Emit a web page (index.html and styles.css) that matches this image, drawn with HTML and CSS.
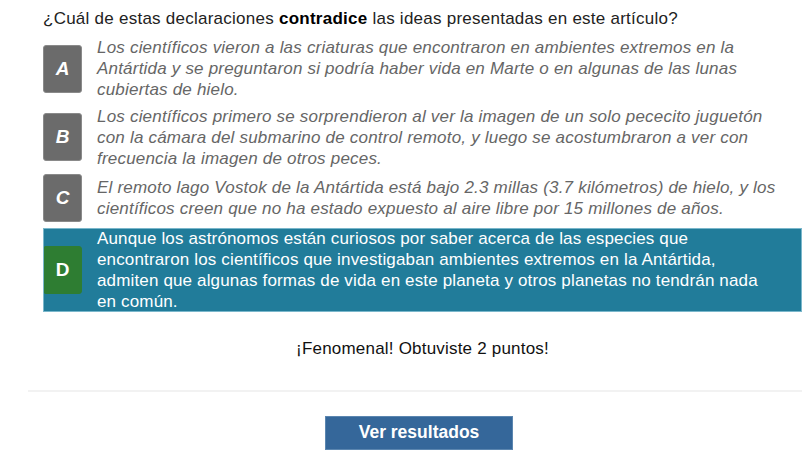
FILE: index.html
```html
<!DOCTYPE html>
<html lang="es">
<head>
<meta charset="utf-8">
<link rel="stylesheet" href="styles.css">
</head>
<body>
<div class="page">
  <div class="quiz">
    <p class="question">¿Cuál de estas declaraciones <b>contradice</b> las ideas presentadas en este artículo?</p>
    <div class="options">
      <div class="option">
        <span class="letter">A</span>
        <span class="text">Los científicos vieron a las criaturas que encontraron en ambientes extremos en la Antártida y se preguntaron si podría haber vida en Marte o en algunas de las lunas cubiertas de hielo.</span>
      </div>
      <div class="option">
        <span class="letter">B</span>
        <span class="text">Los científicos primero se sorprendieron al ver la imagen de un solo pececito juguetón con la cámara del submarino de control remoto, y luego se acostumbraron a ver con frecuencia la imagen de otros peces.</span>
      </div>
      <div class="option">
        <span class="letter">C</span>
        <span class="text">El remoto lago Vostok de la Antártida está bajo 2.3 millas (3.7 kilómetros) de hielo, y los científicos creen que no ha estado expuesto al aire libre por 15 millones de años.</span>
      </div>
      <div class="option correct">
        <span class="letter">D</span>
        <span class="text">Aunque los astrónomos están curiosos por saber acerca de las especies que encontraron los científicos que investigaban ambientes extremos en la Antártida, admiten que algunas formas de vida en este planeta y otros planetas no tendrán nada en común.</span>
      </div>
    </div>
    <p class="feedback">¡Fenomenal! Obtuviste 2 puntos!</p>
  </div>
  <div class="footer">
    <hr class="sep">
    <button class="results">Ver resultados</button>
  </div>
</div>
</body>
</html>
```

FILE: styles.css
```css
* { box-sizing: border-box; }
html, body { margin: 0; padding: 0; background: #fff; }
body { font-family: "Liberation Sans", Arial, sans-serif; }
.page { padding-left: 28px; width: 810px; }
.quiz { padding-left: 15px; width: 774px; }
.question {
  margin: 0;
  padding-top: 8px;
  font-size: 17px;
  letter-spacing: 0.25px;
  line-height: 21px;
  color: #222;
}
.question b { color: #000; }
.options {
  margin-top: 8px;
  display: flex;
  flex-direction: column;
  gap: 5.5px;
}
.option {
  display: flex;
  align-items: center;
  gap: 15px;
  min-height: 48px;
}
.letter {
  flex: none;
  width: 39px;
  height: 48px;
  display: flex;
  align-items: center;
  justify-content: center;
  background: #6b6b6b;
  border: 1px solid #8a8a8a;
  border-radius: 3px;
  color: #fff;
  font-weight: bold;
  font-style: italic;
  font-size: 19px;
}
.text {
  font-style: italic;
  font-size: 17px;
  letter-spacing: 0.2px;
  line-height: 21px;
  color: #666;
  padding-right: 17px;
}
.option.correct {
  background: #217c9a;
  outline: 1px solid #7ab7cb;
  outline-offset: -1px;
}
.option.correct .letter {
  background: #2e7d32;
  border-color: #2e7d32;
  font-style: normal;
}
.option.correct .text {
  color: #fff;
  font-style: normal;
  letter-spacing: 0.15px;
  padding-right: 25px;
}
.feedback {
  margin: 26px 0 0 0;
  text-align: center;
  font-size: 17px;
  letter-spacing: 0.2px;
  line-height: 21px;
  color: #111;
}
.footer {
  display: flex;
  flex-direction: column;
  align-items: center;
}
.sep {
  align-self: stretch;
  margin: 31px 8px 0 0;
  border: 0;
  height: 2px;
  background: #f2f2f2;
}
.results {
  margin-top: 24px;
  width: 188px;
  height: 34px;
  background: #35679a;
  border: 1px solid #5b86b0;
  color: #fff;
  font-family: "Liberation Sans", Arial, sans-serif;
  font-weight: bold;
  font-size: 17.5px;
  padding: 0;
}
```
